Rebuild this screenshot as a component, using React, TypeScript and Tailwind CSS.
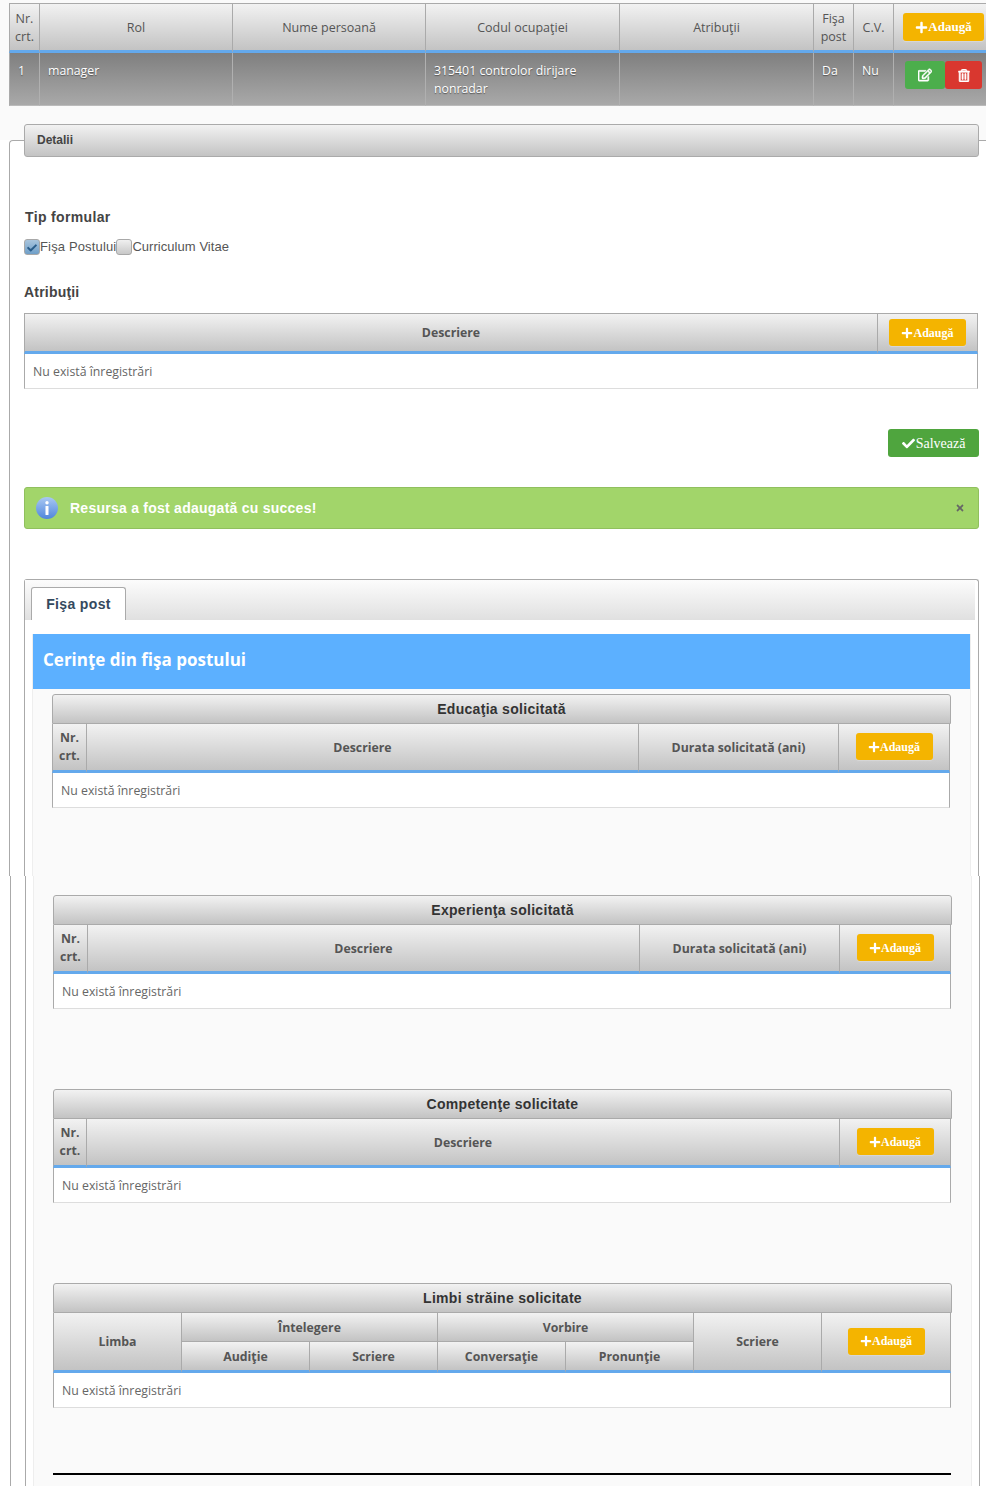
import React from "react";
import { FaPlus, FaCheck, FaTimes, FaRegEdit, FaRegTrashAlt } from "react-icons/fa";

const grad = "bg-[linear-gradient(#f2f2f2,#c3c3c3)]";
const cellFont = "font-['Open_Sans',sans-serif] leading-[18px]";

function Th({ children, className = "", ...rest }: React.ThHTMLAttributes<HTMLTableCellElement>) {
  return (
    <th {...rest} className={`${grad} ${cellFont} text-[12.3px] font-bold text-[#555] text-center align-middle border-r border-r-[#aaa] border-b-[3px] border-b-[#64a9ec] px-0 pb-0 pt-px ${className}`}>
      {children}
    </th>
  );
}

function AddBtn({ big = false }: { big?: boolean }) {
  return (
    <button className={`inline-flex items-center justify-center rounded-[3px] bg-[#f4b400] text-white font-['Liberation_Serif',serif] font-bold shadow-[0_1px_1px_#d8d8d8] ${big ? "w-[81px] h-[28px] text-[13px]" : "w-[77px] h-[27px] text-[12px]"}`}>
      <FaPlus className={big ? "w-[13px] h-[13px]" : "w-[12px] h-[12px]"} />
      Adaugă
    </button>
  );
}

function EmptyRow({ span }: { span: number }) {
  return (
    <tr>
      <td colSpan={span} className={`${cellFont} font-normal text-[12.3px] text-[#666] h-[35px] bg-white px-[8px] pt-px border-x border-x-[#aaa] border-b border-b-[#ddd]`}>
        Nu există înregistrări
      </td>
    </tr>
  );
}

function Section({ title, children, className = "" }: { title: string; children: React.ReactNode; className?: string }) {
  return (
    <section className={className}>
      <div className={`w-[899px] h-[30px] ${grad} border border-[#aaa] rounded-t-[3px] flex items-center justify-center font-['Liberation_Sans',sans-serif] font-bold text-[14px] tracking-[0.3px] text-[#333]`}>
        {title}
      </div>
      <table className="w-[898px] table-fixed border-separate border-spacing-0">{children}</table>
    </section>
  );
}

function EduHead() {
  return (
    <>
      <thead>
        <tr className="h-[49px]">
          <Th className="w-[35px] border-l border-l-[#aaa] !pt-0 !pb-px">Nr.<br />crt.</Th>
          <Th className="w-[552px]">Descriere</Th>
          <Th className="w-[200px]">Durata solicitată (ani)</Th>
          <Th className="w-[111px] !pt-0 !pb-px"><AddBtn /></Th>
        </tr>
      </thead>
      <tbody><EmptyRow span={4} /></tbody>
    </>
  );
}

function Check({ on }: { on?: boolean }) {
  return (
    <span className={`w-[16px] h-[16px] rounded-[3px] border border-[#a8a8a8] flex items-center justify-center shrink-0 ${on ? "bg-[linear-gradient(#a9c5dd,#6f9fc8)]" : "bg-[linear-gradient(#f0f0f0,#c8c8c8)]"}`}>
      {on && <FaCheck className="w-[10px] h-[10px] text-[#2a5d8a] mt-[2px]" />}
    </span>
  );
}

const topCols: [string, string][] = [
  ["w-[31px]", "Nr.|crt."],
  ["w-[193px]", "Rol"],
  ["w-[193px]", "Nume persoană"],
  ["w-[194px]", "Codul ocupaţiei"],
  ["w-[194px]", "Atribuţii"],
  ["w-[40px]", "Fişa|post"],
  ["w-[40px]", "C.V."],
];

const rowCell = `align-top pt-[9px] px-[8px] ${cellFont} text-[12.3px] text-white [text-shadow:0_1px_1px_#555] border-r border-r-[#b0b0b0] border-b border-b-[#bbb] bg-[linear-gradient(#7f7f7f,#a9a9a9)]`;

export default function App() {
  return (
    <div className="w-[986px] min-h-[1506px] bg-white overflow-hidden">
      <div className="bg-[#fafafa] pt-[3px] pl-[9px] h-[140px]">
        <table className="w-[977px] table-fixed border-separate border-spacing-0">
          <thead>
            <tr className="h-[50px]">
              {topCols.map(([w, t], i) => (
                <Th key={t} className={`${w} !font-normal !text-[12.5px] !pt-[2px] border-t border-t-[#aaa] ${i === 0 ? "border-l border-l-[#aaa]" : ""}`}>
                  {t.split("|").map((p) => (
                    <span key={p} className="block">{p}</span>
                  ))}
                </Th>
              ))}
              <Th className="w-[92px] border-t border-t-[#aaa] !border-r-0 text-left !pt-0">
                <span className="block pl-[9px]"><AddBtn big /></span>
              </Th>
            </tr>
          </thead>
          <tbody>
            <tr className="h-[53px]">
              <td className={`${rowCell} border-l border-l-[#aaa]`}>1</td>
              <td className={rowCell}>manager</td>
              <td className={rowCell}></td>
              <td className={rowCell}>315401 controlor dirijare nonradar</td>
              <td className={rowCell}></td>
              <td className={rowCell}>Da</td>
              <td className={rowCell}>Nu</td>
              <td className={`${rowCell} !border-r-0 !p-0 !pt-[8px] !pl-[11px]`}>
                <div className="flex">
                  <button className="w-[40px] h-[28px] rounded-[3px] bg-[#4cae4c] flex items-center justify-center">
                    <FaRegEdit stroke="currentColor" strokeWidth={20} className="w-[14px] h-[14px] text-white" />
                  </button>
                  <button className="w-[37px] h-[28px] rounded-[3px] bg-[#d9372f] flex items-center justify-center">
                    <FaRegTrashAlt stroke="currentColor" strokeWidth={25} className="w-[12px] h-[13px] text-white" />
                  </button>
                </div>
              </td>
            </tr>
          </tbody>
        </table>
      </div>

      {/* Detalii fieldset, upper part */}
      <div className="ml-[9px] border-t border-l border-[#aaa] rounded-tl-[4px] pl-[14px]">
        <div className={`-mt-[17px] w-[955px] h-[33px] pb-[2px] ${grad} border border-[#aaa] rounded-[3px] flex items-center pl-[12px] font-['Liberation_Sans',sans-serif] font-bold text-[12px] text-[#444]`}>
          Detalii
        </div>

        <div className="w-[955px] font-['Liberation_Sans',sans-serif]">
          <h3 className="mt-[50px] pl-px text-[14px] leading-[20px] font-bold tracking-[0.35px] text-[#444]">Tip formular</h3>
          <div className="mt-[12px] h-[16px] flex items-center text-[13px] text-[#555]">
            <Check on />
            <span className="tracking-[0.15px]">Fişa Postului</span>
            <Check />
            <span className="tracking-[0.05px]">Curriculum Vitae</span>
          </div>
          <h3 className="mt-[27px] text-[14px] leading-[20px] font-bold tracking-[0.2px] text-[#444]">Atribuţii</h3>
          <table className="mt-[11px] w-[954px] table-fixed border-separate border-spacing-0">
            <thead>
              <tr className="h-[41px]">
                <Th className="w-[854px] border-t border-t-[#aaa] border-l border-l-[#aaa] !pt-0">Descriere</Th>
                <Th className="w-[100px] border-t border-t-[#aaa] text-left !pt-0">
                  <span className="block pl-[11px]"><AddBtn /></span>
                </Th>
              </tr>
            </thead>
            <tbody><EmptyRow span={2} /></tbody>
          </table>
          <div className="mt-[40px] flex justify-end">
            <button className="w-[91px] h-[28px] rounded-[3px] bg-[#4fa53e] text-white font-['Liberation_Serif',serif] text-[14px] flex items-center justify-center gap-px">
              <FaCheck className="w-[13px] h-[13px]" />
              Salvează
            </button>
          </div>
          <div className="mt-[30px] h-[42px] rounded-[3px] bg-[#a2d56a] border border-[#90c05e] flex items-center pl-[10px] pr-[13px] text-white font-bold text-[14px] tracking-[0.25px]">
            <svg width="24" height="24" viewBox="0 0 24 24" className="shrink-0">
              <defs>
                <linearGradient id="infoGrad" x1="0" y1="0" x2="0" y2="1">
                  <stop offset="0" stopColor="#a9c8f2" />
                  <stop offset="1" stopColor="#4f86dc" />
                </linearGradient>
              </defs>
              <circle cx="12" cy="12" r="11" fill="url(#infoGrad)" />
              <circle cx="12" cy="6.8" r="1.7" fill="#fff" />
              <rect x="10.5" y="10" width="3" height="9" rx="0.6" fill="#fff" />
            </svg>
            <span className="ml-[11px] flex-1">Resursa a fost adaugată cu succes!</span>
            <FaTimes className="w-[10px] h-[10px] text-[#666]" />
          </div>
        </div>

        {/* Tab panel, upper part */}
        <div className="mt-[50px] w-[955px] border-x border-t border-[#aaa] rounded-t-[3px] font-['Open_Sans',sans-serif]">
          <div className="h-[40px] pt-[7px] pl-[6px] mr-[3px] bg-[linear-gradient(#fcfcfc,#e0e0e0)]">
            <div className="w-[95px] h-[33px] bg-white border-x border-t border-[#aaa] rounded-t-[3px] flex items-center justify-center font-['Liberation_Sans',sans-serif] font-bold text-[14px] tracking-[0.35px] text-[#34495e]">
              Fişa post
            </div>
          </div>
          <div className="pt-[14px] pl-[7px]">
            <div className="w-[939px] border-x border-x-[#eee] bg-[#fafafa]">
              <h2 className="h-[55px] pb-[3px] bg-[#5cb0ff] flex items-center pl-[10px] text-white font-bold text-[17px]">
                Cerinţe din fişa postului
              </h2>
              <div className="pl-[19px] pt-[5px] pb-[68px]">
                <Section title="Educaţia solicitată"><EduHead /></Section>
              </div>
            </div>
          </div>
        </div>
      </div>

      {/* lower part, photographed one pixel to the right */}
      <div className="ml-[10px] border-l border-l-[#aaa] pl-[14px]">
        <div className="w-[955px] border-x border-x-[#aaa] pl-[7px] font-['Open_Sans',sans-serif]">
          <div className="w-[939px] border-x border-x-[#eee] bg-[#fafafa] pl-[19px] pt-[19px] pb-[11px]">
            <Section title="Experienţa solicitată"><EduHead /></Section>
            <Section title="Competenţe solicitate" className="mt-[80px]">
              <thead>
                <tr className="h-[49px]">
                  <Th className="w-[34px] border-l border-l-[#aaa] !pt-0 !pb-px">Nr.<br />crt.</Th>
                  <Th className="w-[753px]">Descriere</Th>
                  <Th className="w-[111px] !pt-0 !pb-px"><AddBtn /></Th>
                </tr>
              </thead>
              <tbody><EmptyRow span={3} /></tbody>
            </Section>
            <Section title="Limbi străine solicitate" className="mt-[80px]">
              <colgroup>
                <col className="w-[129px]" />
                <col className="w-[128px]" />
                <col className="w-[128px]" />
                <col className="w-[128px]" />
                <col className="w-[128px]" />
                <col className="w-[128px]" />
                <col className="w-[129px]" />
              </colgroup>
              <thead>
                <tr className="h-[29px]">
                  <Th rowSpan={2} className="border-l border-l-[#aaa]">Limba</Th>
                  <Th colSpan={2} className="!border-b !border-b-[#aaa] !pt-[2px]">Întelegere</Th>
                  <Th colSpan={2} className="!border-b !border-b-[#aaa] !pt-[2px]">Vorbire</Th>
                  <Th rowSpan={2}>Scriere</Th>
                  <Th rowSpan={2} className="!pt-0 !pb-px"><AddBtn /></Th>
                </tr>
                <tr className="h-[31px]">
                  <Th>Audiţie</Th>
                  <Th>Scriere</Th>
                  <Th>Conversaţie</Th>
                  <Th>Pronunţie</Th>
                </tr>
              </thead>
              <tbody><EmptyRow span={7} /></tbody>
            </Section>
            <hr className="mt-[65px] w-[898px] h-[2px] bg-black border-0" />
          </div>
        </div>
      </div>
    </div>
  );
}
